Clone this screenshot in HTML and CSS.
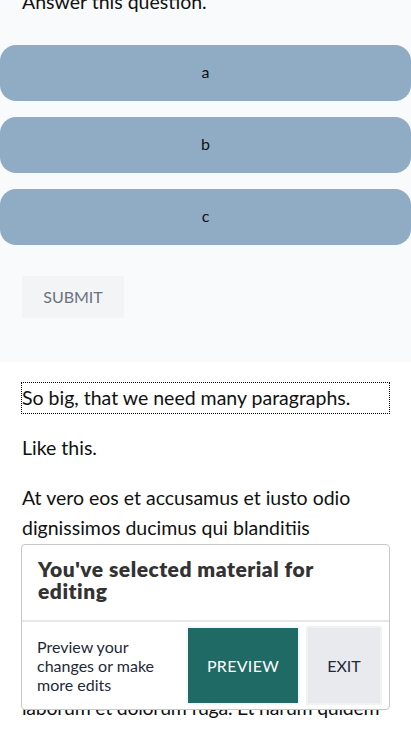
FILE: index.html
```html
<!DOCTYPE html>
<html>
<head>
<meta charset="utf-8">
<link rel="stylesheet" href="styles.css">
</head>
<body>
<section class="quiz">
  <p class="question">Answer this question.</p>
  <div class="options">
    <button class="option">a</button>
    <button class="option">b</button>
    <button class="option">c</button>
  </div>
  <button class="submit">SUBMIT</button>
</section>
<section class="content">
  <p class="selected">So big, that we need many paragraphs.</p>
  <p>Like this.</p>
  <p>At vero eos et accusamus et iusto odio dignissimos ducimus qui blanditiis praesentium voluptatum deleniti atque corrupti quos dolores et quas molestias excepturi sint occaecati cupiditate non provident, similique sunt in culpa qui officia deserunt mollitia animi, id est <span class="tight">laborum et dolorum fuga. Et harum quidem</span> rerum facilis est et expedita distinctio. Nam libero tempore, cum soluta nobis est eligendi optio cumque nihil impedit quo minus id quod maxime placeat facere possimus.</p>
</section>
<div class="popup">
  <div class="popup-head"><span class="popup-title">You've selected material for editing</span></div>
  <div class="popup-body">
    <div class="popup-text">Preview your changes or make more edits</div>
    <button class="btn-preview">PREVIEW</button>
    <button class="btn-exit">EXIT</button>
  </div>
</div>
</body>
</html>
```

FILE: styles.css
```css
html, body {
  margin: 0;
  padding: 0;
  background: #ffffff;
  font-family: Lato, "Liberation Sans", sans-serif;
  color: #111111;
}
.quiz {
  background: #f9fafb;
  padding: 0 0 44px 0;
  display: flex;
  flex-direction: column;
  align-items: flex-start;
}
.question {
  margin: -13px 22px 28px 22px;
  font-size: 19.5px;
  line-height: 30px;
}
.options {
  display: flex;
  flex-direction: column;
  gap: 16px;
  width: 100%;
}
.option {
  height: 56px;
  width: 100%;
  border: none;
  border-radius: 16px;
  background: #90abc4;
  font-family: Lato, sans-serif;
  font-size: 16px;
  color: #111111;
  padding: 0 0 3px 0;
}
.submit {
  margin: 31px 0 0 22px;
  width: 102px;
  height: 42px;
  border: none;
  background: #f3f4f6;
  color: #6b7280;
  font-family: Lato, sans-serif;
  font-size: 16px;
  padding: 0 0 2px 0;
}
.content {
  padding: 21px 22px 40px 22px;
}
.content p {
  margin: 0 0 20px 0;
  font-size: 19.5px;
  line-height: 30px;
}
.content p.selected {
  outline: 1px dotted #000;
}
.tight {
  letter-spacing: -0.25px;
}
.popup {
  position: fixed;
  left: 21px;
  right: 21px;
  bottom: 21px;
  background: #ffffff;
  border: 1px solid #c8c8c8;
  border-radius: 4px;
}
.popup-head {
  padding: 13px 16px 18px 16px;
  border-bottom: 2px solid #e5e7eb;
}
.popup-title {
  display: block;
  max-width: 290px;
  font-family: Lato, sans-serif;
  font-weight: 800;
  font-size: 21px;
  line-height: 22px;
  letter-spacing: 0.5px;
  color: #333333;
}
.popup-body {
  display: flex;
  align-items: stretch;
  gap: 6px;
  padding: 4px 7px 4px 15px;
  height: 79px;
}
.popup-text {
  flex: 1;
  align-self: center;
  font-size: 16px;
  line-height: 19px;
  color: #1f2937;
}
.btn-preview {
  width: 114px;
  border: 2px solid #f5f6f7;
  background: #1f6a65;
  color: #ffffff;
  font-family: Lato, sans-serif;
  font-size: 16px;
  letter-spacing: 0.3px;
  padding: 0;
}
.btn-exit {
  width: 76px;
  border: 2px solid #f1f2f4;
  background: #e9eaed;
  color: #1f2937;
  font-family: Lato, sans-serif;
  font-size: 16px;
  padding: 0;
}
```
